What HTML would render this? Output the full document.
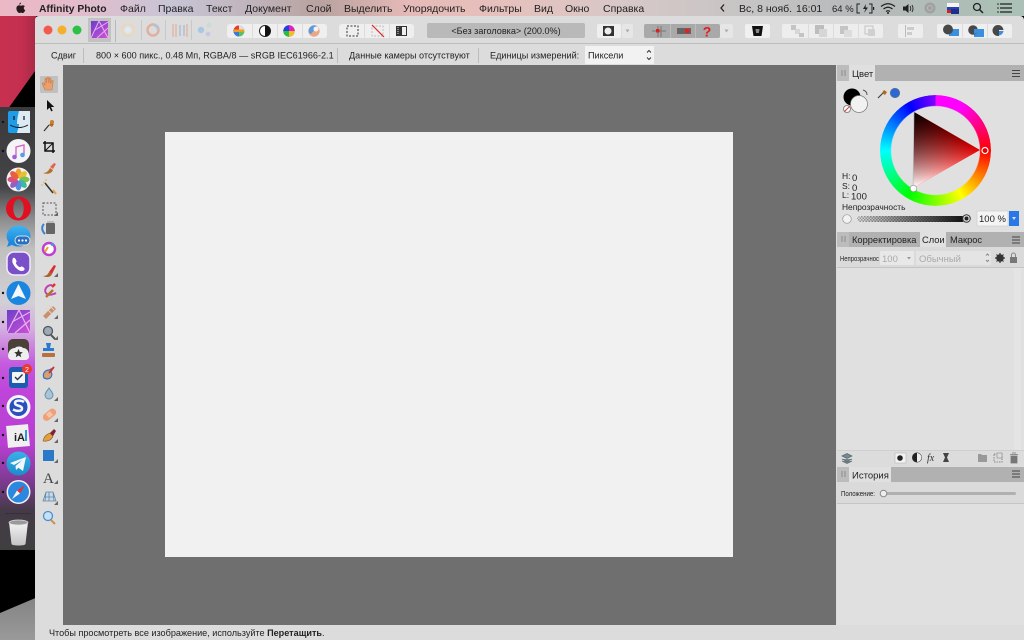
<!DOCTYPE html>
<html lang="ru">
<head>
<meta charset="utf-8">
<title>Affinity Photo</title>
<style>
html,body{margin:0;padding:0;width:1024px;height:640px;overflow:hidden;background:#000}
.a{position:absolute}
svg text{font-family:"Liberation Sans",sans-serif;fill:#222}
</style>
</head>
<body>
<div class="a" style="left:0;top:0;width:1024px;height:640px;overflow:hidden;filter:blur(.3px)">
<!-- desktop -->
<div class="a" style="left:0;top:16px;width:36px;height:94px;background:linear-gradient(90deg,#c8304f 0,#c42f50 60%,#a82a45 100%)"></div>
<div class="a" style="left:0;top:16px;width:36px;height:94px;background:#000;clip-path:polygon(100% 57%,100% 100%,20% 100%)"></div>
<div class="a" style="left:0;top:550px;width:36px;height:90px;background:linear-gradient(180deg,#6a6a6a 0,#9a9a9a 100%)"></div>
<div class="a" style="left:0;top:550px;width:36px;height:90px;background:#000;clip-path:polygon(0 0,100% 0,100% 53%,0 70%)"></div>
<!-- dock -->
<div class="a" style="left:0;top:107px;width:35px;height:443px;background:linear-gradient(180deg,#3a3a3c 0,#444446 18%,#8a8a8c 25%,#c0c0c0 32%,#d2d0d6 44%,#d4aee0 50%,#c45ade 58%,#bf45da 64%,#b83fd2 76%,#7a3a8c 85%,#453a48 91%,#3f3f40 100%)"></div>
<!-- menu bar -->
<div class="a" style="left:0;top:0;width:1024px;height:16px;background:linear-gradient(90deg,#ecb8c6 0,#e3bccb 80px,#c8c5d6 170px,#c0b4bc 250px,#b9a29f 320px,#e6bab8 410px,#e6c0bc 500px,#d8c8c8 620px,#c4c4c4 760px,#b8b9ba 850px,#abc0b6 1000px)"></div>
<!-- window -->
<div class="a" style="left:35px;top:16px;width:989px;height:624px;background:#dcdcdc;border-radius:4px 4px 0 0"></div>
<div class="a" style="left:35px;top:43px;width:989px;height:1px;background:#bdbdbd"></div>
<!-- canvas -->
<div class="a" style="left:63px;top:65px;width:773px;height:560px;background:#6f6f6f"></div>
<div class="a" style="left:165px;top:132px;width:568px;height:425px;background:#f1f1f1"></div>
<!-- panels -->
<div class="a" style="left:837px;top:65px;width:187px;height:560px;background:#e0e0e0"></div>
<div class="a" style="left:837px;top:65px;width:187px;height:16px;background:#b1b1b1"></div>
<div class="a" style="left:837px;top:65px;width:12px;height:16px;background:#bcbcbc"></div>
<div class="a" style="left:849px;top:65px;width:26px;height:16px;background:#e0e0e0"></div>
<div class="a" style="left:837px;top:232px;width:187px;height:15px;background:#b1b1b1"></div>
<div class="a" style="left:837px;top:232px;width:12px;height:15px;background:#bcbcbc"></div>
<div class="a" style="left:920px;top:232px;width:26px;height:15px;background:#e0e0e0"></div>
<div class="a" style="left:837px;top:247px;width:187px;height:20px;background:#dadada"></div>
<div class="a" style="left:837px;top:267px;width:187px;height:1px;background:#c4c4c4"></div>
<div class="a" style="left:1014px;top:268px;width:7px;height:182px;background:#e4e4e4"></div>
<div class="a" style="left:837px;top:450px;width:187px;height:1px;background:#cfcfcf"></div>
<div class="a" style="left:837px;top:451px;width:187px;height:16px;background:#dcdcdc"></div>
<div class="a" style="left:837px;top:467px;width:187px;height:15px;background:#b1b1b1"></div>
<div class="a" style="left:837px;top:467px;width:12px;height:15px;background:#bcbcbc"></div>
<div class="a" style="left:849px;top:467px;width:42px;height:15px;background:#e0e0e0"></div>
<div class="a" style="left:837px;top:482px;width:187px;height:21px;background:#dadada"></div>
<div class="a" style="left:837px;top:503px;width:187px;height:1px;background:#c4c4c4"></div>
<!-- color wheel -->
<div class="a" style="left:880px;top:95px;width:111px;height:111px;border-radius:50%;background:conic-gradient(from 0deg,#ff00ff 30deg,#ff0000 90deg,#ffff00 150deg,#00ff00 210deg,#00ffff 270deg,#0000ff 330deg,#ff00ff 390deg);-webkit-mask:radial-gradient(circle,transparent 44px,#000 45px);mask:radial-gradient(circle,transparent 44px,#000 45px)"></div>
<svg class="a" style="left:0;top:0" width="1024" height="640" viewBox="0 0 1024 640" xmlns="http://www.w3.org/2000/svg">
<defs>
<linearGradient id="tBlack" gradientUnits="userSpaceOnUse" x1="914" y1="112" x2="946" y2="169"><stop offset="0" stop-color="#000"/><stop offset="1" stop-color="#000" stop-opacity="0"/></linearGradient>
<linearGradient id="tWhite" gradientUnits="userSpaceOnUse" x1="913" y1="188" x2="946" y2="131"><stop offset="0" stop-color="#fff"/><stop offset="1" stop-color="#fff" stop-opacity="0"/></linearGradient>
<linearGradient id="alpha" x1="0" x2="1"><stop offset="0" stop-color="#000" stop-opacity="0"/><stop offset="1" stop-color="#111"/></linearGradient>
<pattern id="chk" width="3" height="3" patternUnits="userSpaceOnUse"><rect width="3" height="3" fill="#e4e4e4"/><rect width="1.500" height="1.500" fill="#999"/><rect x="1.500" y="1.500" width="1.500" height="1.500" fill="#999"/></pattern>
<linearGradient id="blueG" x1="0" x2="0" y1="0" y2="1"><stop offset="0" stop-color="#40b4f0"/><stop offset="1" stop-color="#1480d8"/></linearGradient>
<linearGradient id="tgG" x1="0" x2="0" y1="0" y2="1"><stop offset="0" stop-color="#3ab0e8"/><stop offset="1" stop-color="#1c8cc8"/></linearGradient>
<linearGradient id="affG" x1="0" x2="1" y1="0" y2="1"><stop offset="0" stop-color="#6a3fc8"/><stop offset="1" stop-color="#d050d8"/></linearGradient>
<linearGradient id="binG" x1="0" x2="0" y1="0" y2="1"><stop offset="0" stop-color="#f4f4f4"/><stop offset="1" stop-color="#c4c4c4"/></linearGradient>
</defs>

<!-- menu bar -->
<g font-size="10.5">
<path d="M23 5.200c-.9-.1-1.500.5-2 .5s-1.200-.5-1.900-.5c-1.500.1-2.700 1.300-2.700 3.200 0 2.300 1.700 4.600 2.900 4.600.6 0 1-.4 1.700-.4s1 .4 1.700.4c1.100 0 2.100-1.700 2.500-2.900-1.900-.9-1.800-3.200-.2-4zM21 2.500c-.9.100-1.800 1-1.700 2.200 1 0 1.800-1 1.700-2.200z" fill="#2a1a1e"/>
<text x="39" y="12" font-weight="700" font-size="10.300" fill="#1a1a1a">Affinity Photo</text>
<text x="120" y="12" fill="#444">Файл</text>
<text x="158" y="12" fill="#444">Правка</text>
<text x="206" y="12" fill="#333">Текст</text>
<text x="245" y="12" fill="#222">Документ</text>
<text x="306" y="12" fill="#222">Слой</text>
<text x="344" y="12" fill="#333">Выделить</text>
<text x="403" y="12" fill="#444">Упорядочить</text>
<text x="479" y="12" fill="#444">Фильтры</text>
<text x="534" y="12" fill="#444">Вид</text>
<text x="565" y="12" fill="#444">Окно</text>
<text x="603" y="12" fill="#444">Справка</text>
<path d="M724 4.500l-3 3.500 3 3.500" fill="none" stroke="#222" stroke-width="1.300"/>
<text x="739" y="12" fill="#333">Вс, 8 нояб.</text>
<text x="796" y="12" fill="#222">16:01</text>
<text x="832" y="12" fill="#222" font-size="9.500">64 %</text>
<path d="M860 4h-3v9h3M869 4h3v9h-3" fill="none" stroke="#222"/><path d="M866 4l-3 5h2.500l-1.500 4 4-5.500h-2.500z" fill="#222"/><rect x="873" y="7" width="1.200" height="3" fill="#222"/>
<path d="M881 6.500q7-5.500 14 0M883.500 9q4.500-3.500 9 0M886 11.500q2-1.500 4 0" fill="none" stroke="#222" stroke-width="1.200"/><circle cx="888" cy="13" r="1" fill="#222"/>
<path d="M903 6.500h2.500l3-2.500v9l-3-2.500h-2.500z" fill="#222"/><path d="M910 6q1.500 2.500 0 5M912 5q2 3.500 0 7" fill="none" stroke="#333"/>
<circle cx="930" cy="8" r="5.500" fill="#a0a0a0"/><circle cx="930" cy="8" r="2.500" fill="none" stroke="#bbb"/>
<rect x="947" y="3" width="12" height="4" fill="#f4f4f4"/><rect x="947" y="7" width="12" height="3" fill="#2a3fb0"/><rect x="947" y="10" width="12" height="3" fill="#d82020"/><rect x="951" y="9" width="8" height="5" fill="#1a2f90"/>
<circle cx="977" cy="7" r="3.500" fill="none" stroke="#222" stroke-width="1.300"/><path d="M979.500 9.500l3.500 3.500" stroke="#222" stroke-width="1.500"/>
<path d="M1000 4h12M1000 8h12M1000 12h12" stroke="#222" stroke-width="1.300"/><circle cx="998" cy="4" r=".8" fill="#222"/><circle cx="998" cy="8" r=".8" fill="#222"/><circle cx="998" cy="12" r=".8" fill="#222"/>
</g>

<!-- traffic lights -->
<circle cx="48" cy="30" r="4.500" fill="#f25a50"/>
<circle cx="62" cy="30" r="4.500" fill="#f2b02e"/>
<circle cx="77" cy="30" r="4.500" fill="#2cc144"/>
<!-- app persona -->
<rect x="88" y="18" width="23" height="24" fill="#c2c2c2"/>
<rect x="91" y="21" width="17" height="17" fill="url(#affG)"/>
<path d="M91 38l8-17 9 17M95 30l13-8M97 38l11-10" fill="none" stroke="#e8b0f0" stroke-width="1"/>
<rect x="115" y="20" width="1" height="22" fill="#b8b8b8"/>
<circle cx="128" cy="30" r="6" fill="none" stroke="#ecd6bc" stroke-width="2"/><circle cx="128" cy="30" r="3.500" fill="#e2e8f0"/>
<rect x="141" y="20" width="1" height="20" fill="#c8c8c8"/>
<circle cx="153" cy="30" r="5.500" fill="none" stroke="#e0b0a0" stroke-width="2.500"/><path d="M153 25a5 5 0 0 1 5 5" stroke="#b0c4d8" stroke-width="2.500" fill="none"/>
<rect x="165" y="20" width="1" height="20" fill="#c8c8c8"/>
<path d="M173 24v13M176 24v13" stroke="#e0b0a0" stroke-width="1.200"/><path d="M180 25v11M184 25v11" stroke="#a8b8d0" stroke-width="1.200"/><path d="M187 24v13" stroke="#e0b0a0" stroke-width="1.200"/>
<rect x="191" y="20" width="1" height="20" fill="#c8c8c8"/>
<circle cx="201" cy="30" r="3.200" fill="#a8c8e0"/><circle cx="209" cy="25" r="2.400" fill="#c8dcd0"/><circle cx="208" cy="34" r="2.400" fill="#c8c8e4"/>

<!-- group 1 -->
<rect x="227" y="24" width="100" height="14" rx="3" fill="#efefef"/>
<g stroke="#dcdcdc"><path d="M252.500 24v14M277.500 24v14M302.500 24v14"/></g>
<circle cx="239" cy="31" r="5.500" fill="#5cc060"/><path d="M239 25.500a5.500 5.500 0 0 0-5.500 5.500h5.500z" fill="#e83838"/><path d="M239 25.500a5.500 5.500 0 0 1 5.500 5.500H239z" fill="#ddd"/><path d="M233.500 31a5.500 5.500 0 0 0 5.500 5.500V31z" fill="#3a7ae0"/>
<rect x="234" y="29.500" width="10" height="2.500" fill="#f0a020"/>
<circle cx="265" cy="31" r="5.500" fill="#fff" stroke="#222"/><path d="M265 25.500a5.500 5.500 0 0 1 0 11z" fill="#111"/>
<circle cx="289" cy="31" r="5.700" fill="#e83030"/><path d="M289 31V25.300a5.700 5.700 0 0 1 5.700 5.700z" fill="#e020c0"/><path d="M289 31h5.700a5.700 5.700 0 0 1-5.700 5.700z" fill="#f0c020"/><path d="M289 31v5.700a5.700 5.700 0 0 1-5.700-5.700z" fill="#20c040"/><path d="M289 31h-5.700a5.700 5.700 0 0 1 5.700-5.700z" fill="#2040e0"/>
<circle cx="314" cy="31" r="5.700" fill="#e8a888"/><path d="M309 33a5.700 5.700 0 0 1 8-7l-2 3-4 5z" fill="#5a9ae0"/><circle cx="316" cy="29" r="2.500" fill="#f4f4f4"/>

<!-- group 2 -->
<rect x="339" y="24" width="75" height="14" rx="3" fill="#efefef"/>
<g stroke="#dcdcdc"><path d="M364.500 24v14M389.500 24v14"/></g>
<rect x="347" y="26" width="11" height="10" fill="none" stroke="#333" stroke-dasharray="2 1.500"/>
<rect x="372" y="26" width="11" height="10" fill="none" stroke="#bbb" stroke-dasharray="2 1.500"/><path d="M372 25l12 12" stroke="#e02828" stroke-width="1.200"/>
<rect x="396" y="26" width="11" height="10" fill="#333"/><rect x="402" y="27" width="4" height="8" fill="#eee"/><path d="M398 27v8" stroke="#ddd" stroke-dasharray="1 1"/>

<!-- title -->
<rect x="427" y="23" width="158" height="15" rx="2" fill="#b9b9b9"/>
<text x="506" y="34" font-size="9.100" text-anchor="middle" fill="#1c1c1c">&lt;Без заголовка&gt; (200.0%)</text>

<!-- group 3 -->
<rect x="597" y="24" width="24" height="14" rx="2" fill="#efefef"/>
<rect x="603" y="26" width="11" height="10" fill="#333"/><circle cx="608" cy="31" r="3.500" fill="#eee"/>
<rect x="622" y="24" width="11" height="14" rx="2" fill="#e6e6e6"/><path d="M625.500 29.500h4l-2 3z" fill="#aaa"/>
<rect x="644" y="24" width="76" height="14" rx="2" fill="#a9a9a9"/>
<g stroke="#bcbcbc"><path d="M670.500 24v14M695.500 24v14"/></g>
<path d="M652 31h14M658 26v11M661 26v11" stroke="#777" stroke-width="1"/><rect x="656" y="29" width="3.500" height="3.500" fill="#e02020"/>
<rect x="677" y="28" width="14" height="6" fill="#666"/><rect x="685" y="29" width="4.500" height="4" fill="#e82020"/>
<text x="707" y="36.500" font-size="14" font-weight="700" text-anchor="middle" style="fill:#e01c1c">?</text>
<rect x="720" y="24" width="13" height="14" rx="2" fill="#e6e6e6"/><path d="M724.500 29.500h4l-2 3z" fill="#aaa"/>
<rect x="745" y="24" width="25" height="14" rx="2" fill="#f0f0f0"/>
<path d="M752 26h11l-1.500 10h-8z" fill="#111"/><path d="M755.500 29h4l-.6 4h-2.800z" fill="#888"/>
<rect x="782" y="24" width="101" height="14" rx="2" fill="#ededed"/>
<g stroke="#dcdcdc"><path d="M808.500 24v14M833.500 24v14M858.500 24v14"/></g>
<rect x="791" y="25" width="5" height="5" fill="#c4c4c4"/><rect x="795" y="29" width="5" height="5" fill="#d6d6d6"/><rect x="799" y="33" width="5" height="4" fill="#c4c4c4"/>
<rect x="815" y="25" width="9" height="9" fill="#bdbdbd"/><rect x="819" y="29" width="8" height="8" fill="#d6d6d6"/>
<rect x="840" y="26" width="8" height="8" fill="#c4c4c4"/><rect x="844" y="30" width="8" height="7" fill="#dcdcdc"/>
<rect x="865" y="26" width="8" height="8" fill="none" stroke="#c4c4c4"/><rect x="868" y="29" width="7" height="7" fill="#d0d0d0"/>
<rect x="898" y="24" width="25" height="14" rx="2" fill="#ededed"/>
<path d="M905.500 25v12" stroke="#bbb"/><rect x="907" y="27" width="7" height="3" fill="#ccc"/><rect x="907" y="32" width="5" height="3" fill="#ccc"/>
<rect x="937" y="24" width="75" height="14" rx="2" fill="#efefef"/>
<g stroke="#dcdcdc"><path d="M962.500 24v14M987.500 24v14"/></g>
<rect x="949" y="29" width="10" height="7" fill="#3a90e0"/><path d="M949 36l10-7v7z" fill="#3a90e0"/><circle cx="948" cy="29.500" r="5" fill="#484848"/>
<rect x="974" y="29" width="10" height="8" fill="#3a90e0"/><circle cx="973" cy="30" r="4.800" fill="#484848"/><path d="M974 29h4.500a4.800 4.800 0 0 1-4.500 5z" fill="#3a90e0"/>
<circle cx="998" cy="30.500" r="5.500" fill="#484848"/><path d="M999 30h6v7h-6z" fill="#efefef"/><path d="M999 31h4.500a5 5 0 0 1-4.500 4.500z" fill="#3a90e0"/>

<!-- options bar -->
<rect x="585" y="46" width="69" height="18" fill="#f2f2f2"/>
<g font-size="9.100" fill="#222">
<text x="51" y="58.500">Сдвиг</text>
<text x="96" y="58.500">800 × 600 пикс., 0.48 Мп, RGBA/8 — sRGB IEC61966-2.1</text>
<text x="349" y="58.500">Данные камеры отсутствуют</text>
<text x="490" y="58.500">Единицы измерений:</text>
<text x="588" y="58.500">Пиксели</text>
</g>
<path d="M83.500 48v15M337.500 48v15M478.500 48v15" stroke="#bdbdbd"/>
<path d="M647 52.500l2-2 2 2M647 57.500l2 2 2-2" fill="none" stroke="#333"/>

<!-- tools -->
<rect x="40" y="76" width="18" height="17" rx="1" fill="#c0c0c0"/>
<path d="M45 90l-2.500-6c-.5-1.500 1-1.800 1.500-.6l1 2V79c0-1.300 1.500-1.300 1.500 0v4l.5-5c.1-1.300 1.700-1.300 1.700 0v5l.8-4.400c.2-1.200 1.600-1 1.500.2l-.5 4.700 1.200-2.500c.6-1 1.800-.5 1.400.6L52 90z" fill="#e8a070" stroke="#c87840" stroke-width=".6"/>
<path d="M47 100v10l2.500-2.400 1.700 3.800 1.500-.7-1.700-3.700h3.300z" fill="#111"/>
<path d="M44 131l5-6" stroke="#333" stroke-width="1.200"/><path d="M49 125l2-3 3 2-2 3z" fill="#b06820"/><circle cx="52" cy="122" r="2" fill="#c88030"/>
<path d="M45 141v10h10M43 143h10v10" fill="none" stroke="#111" stroke-width="1.500"/><path d="M45 151l8-8" stroke="#111"/>
<path d="M43 173c4 0 6-3 7-5l3 2c-1 3-5 5-10 3z" fill="#b87028"/><path d="M50 167l4-4 2 1-3 5z" fill="#e86050"/>
<path d="M45 183l8 10" stroke="#333" stroke-width="1.500"/><path d="M53 190l3 4" stroke="#e8a040" stroke-width="2"/><path d="M45 183l-2-1M46 181v-2M43 185h-2" stroke="#e8b040"/>
<rect x="43" y="203" width="13" height="12" fill="none" stroke="#555" stroke-dasharray="2 1.500"/><path d="M54 216h4v-4z" fill="#666"/>
<rect x="46" y="223" width="9" height="11" rx="1" fill="#666"/><path d="M44 224c-3 3-2 7 1 10" stroke="#3a80d0" stroke-width="2" fill="none"/><path d="M47 222h7" stroke="#bbb" stroke-width="2"/>
<circle cx="49" cy="249" r="6" fill="#fff" stroke="#c040d0" stroke-width="2.500"/><path d="M45 252l3-5" stroke="#f0a020" stroke-width="2"/><path d="M51 245l3-1" stroke="#30a0e0" stroke-width="2"/>
<path d="M43 276c4 0 5-2 6-4l3 2c-1 3-5 4-9 2z" fill="#a86428"/><path d="M49 272l5-7 2 1-4 8z" fill="#d83030"/><path d="M54 277h4v-4z" fill="#666"/>
<path d="M52 285c-6 0-9 6-5 9 3 2 7 0 9-1" fill="none" stroke="#c040b0" stroke-width="2"/><path d="M46 297l7-7" stroke="#b87028" stroke-width="2.500"/><path d="M52 287l3-3" stroke="#e03030" stroke-width="2.500"/>
<path d="M43 316l10-10 3 3-10 10z" fill="#c89070"/><path d="M46 308l6 6M49 305l5 5" stroke="#e8d0c0"/><path d="M54 319h4v-4z" fill="#666"/>
<circle cx="48" cy="331" r="4.500" fill="#9ab" stroke="#555" stroke-width="1.300"/><path d="M51 335l4 4" stroke="#555" stroke-width="2"/><path d="M54 340h4v-4z" fill="#666"/>
<path d="M46 343h5l-1 5h4v3H43v-3h4z" fill="#2a7ad0"/><rect x="42" y="353" width="13" height="4" rx="1" fill="#b87040"/>
<path d="M44 378c-2-4 1-8 5-8l4-2-2 4c2 3 0 7-4 7z" fill="#d8a070" stroke="#3a70b0" stroke-width="1.200"/><path d="M49 373l5-6" stroke="#d83030" stroke-width="1.800"/>
<path d="M49 388c-2 3-4 5-4 7a4 4 0 0 0 8 0c0-2-2-4-4-7z" fill="#a8c4d8" stroke="#6890a8"/><path d="M54 401h4v-4z" fill="#666"/>
<rect x="42" y="411" width="15" height="7.500" rx="3.700" fill="#f0a078" transform="rotate(-40 49.500 414.700)"/><rect x="47" y="412" width="5" height="5" fill="#f4c4a8" transform="rotate(-40 49.500 414.500)"/><path d="M54 422h4v-4z" fill="#666"/>
<path d="M43 441c1-5 4-7 7-8l3 3c-1 3-4 6-10 5z" fill="#e0a040" stroke="#805020" stroke-width=".6"/><path d="M50 433l4-4 2 2-3 5z" fill="#802030"/><path d="M54 443h4v-4z" fill="#666"/>
<rect x="43" y="450" width="11" height="11" fill="#2a78c8"/><path d="M54 463h4v-4z" fill="#666"/>
<text x="43" y="483" font-size="15" style="font-family:'Liberation Serif',serif;fill:#444">A</text><path d="M54 484h4v-4z" fill="#666"/>
<path d="M43 501l3-9h7l3 9zM46 492l-1 9M49 492v9M53 492l1 9M44 497h11" fill="#c8d8e8" stroke="#6088a8" stroke-width=".8"/><path d="M54 505h4v-4z" fill="#666"/>
<circle cx="48" cy="516" r="4.500" fill="#c8e0f4" stroke="#4a90d0" stroke-width="1.300"/><path d="M51 520l4 4" stroke="#d09050" stroke-width="2"/>

<!-- dock dots -->
<g fill="#111"><circle cx="3" cy="122" r="1.200"/><circle cx="3" cy="151" r="1.200"/><circle cx="3" cy="293" r="1.200"/><circle cx="3" cy="322" r="1.200"/><circle cx="3" cy="349" r="1.200"/><circle cx="3" cy="378" r="1.200"/><circle cx="3" cy="406" r="1.200"/><circle cx="3" cy="435" r="1.200"/><circle cx="3" cy="463" r="1.200"/><circle cx="3" cy="492" r="1.200"/></g>

<!-- finder -->
<rect x="8" y="111" width="22" height="22" rx="2" fill="#1e9ce8"/><path d="M19 111h11v22H17c1-4 2-6 2-9h-2c0-5 1-9 2-13z" fill="#dceaf4"/><path d="M10 125q9 5 18 0" fill="none" stroke="#111" stroke-width="1"/><path d="M14 116v4M24 116v4" stroke="#111" stroke-width="1.200"/>
<!-- music -->
<circle cx="18.500" cy="151" r="12" fill="#f4f4f6"/><path d="M16 157v-10l8-2v10" fill="none" stroke="#d060c0" stroke-width="1.300"/><circle cx="14.500" cy="157" r="2.300" fill="#a060e0"/><circle cx="22.500" cy="155" r="2.300" fill="#50a0e8"/>
<!-- photos -->
<circle cx="18.500" cy="179.500" r="12" fill="#f2f2f2"/>
<g transform="translate(18.500 179.500)"><ellipse cx="0" cy="-6" rx="3" ry="5" fill="#f0a030"/><ellipse cx="0" cy="-6" rx="3" ry="5" fill="#e8c030" transform="rotate(45)"/><ellipse cx="0" cy="-6" rx="3" ry="5" fill="#80c050" transform="rotate(90)"/><ellipse cx="0" cy="-6" rx="3" ry="5" fill="#40b8a0" transform="rotate(135)"/><ellipse cx="0" cy="-6" rx="3" ry="5" fill="#5090e0" transform="rotate(180)"/><ellipse cx="0" cy="-6" rx="3" ry="5" fill="#9060c8" transform="rotate(225)"/><ellipse cx="0" cy="-6" rx="3" ry="5" fill="#d85080" transform="rotate(270)"/><ellipse cx="0" cy="-6" rx="3" ry="5" fill="#e86040" transform="rotate(315)"/></g>
<!-- opera -->
<path fill-rule="evenodd" d="M18.500 196.500a12.500 12 0 1 0 0 24 12.500 12 0 1 0 0-24zM18.500 199a5.200 9.500 0 1 1 0 19 5.200 9.500 0 1 1 0-19z" fill="#e01020"/>
<!-- messages -->
<ellipse cx="18.500" cy="236" rx="12" ry="10.500" fill="url(#blueG)"/><path d="M9 241l-2 6 7-3z" fill="#1c88e0"/><rect x="15" y="236" width="15" height="9" rx="4.500" fill="#2a70c0" stroke="#ddd"/><g fill="#fff"><circle cx="19" cy="240.500" r="1.100"/><circle cx="22.500" cy="240.500" r="1.100"/><circle cx="26" cy="240.500" r="1.100"/></g>
<!-- viber -->
<rect x="7" y="252" width="23" height="23" rx="7" fill="#7a50c8" stroke="#f0eaf8" stroke-width="1.500"/><path d="M13 258c2-1 3 2 3.500 3s-1 1.500-.5 2.500 2 3 3.500 3.500 1.500-1 2.500-.5 3 1.500 2.500 3-3 2-5 1c-3-1.500-6-5-7-8-.5-1.500 0-3.500.5-4.500z" fill="#fff"/>
<!-- spark -->
<circle cx="18.500" cy="293" r="12" fill="#1a86e0"/><path d="M18.500 284l7.500 15-7.500-3-7.500 3z" fill="#f4f8fc"/>
<!-- affinity -->
<rect x="7" y="310" width="23" height="23" fill="url(#affG)"/><path d="M7 333l12-23 11 23M12 322l18-10M15 333l15-13" fill="none" stroke="#e8b0f0" stroke-width="1.200"/>
<!-- bear -->
<rect x="8" y="339" width="21" height="21" rx="5" fill="#4a4038"/><path d="M8 356c0-6 4-8 7-8 1-2 7-2 8 0 3 0 6 2 6 8v1a4 4 0 0 1-4 3H12a4 4 0 0 1-4-4z" fill="#eee"/><path d="M18.500 349l1.300 3 3 .2-2.300 2 .7 3-2.700-1.700-2.700 1.700.7-3-2.300-2 3-.2z" fill="#333"/>
<!-- things -->
<rect x="9" y="367" width="19" height="21" rx="3" fill="#1c5cb0"/><rect x="12" y="372" width="13" height="11" rx="1" fill="#f2f4f8"/><path d="M15 377l2.500 2.500 5-5" fill="none" stroke="#234" stroke-width="1.400"/><circle cx="27" cy="369" r="5" fill="#e83a30"/><text x="27" y="372" font-size="7" text-anchor="middle" style="fill:#fff">2</text>
<!-- simplenote -->
<circle cx="18.500" cy="407" r="12" fill="#f4f6fa"/><circle cx="18.500" cy="407" r="9" fill="#2a50c0"/><path d="M24 402c-3-2-9-2-9 1 0 3.500 7 2 7 5.500 0 3-5 3-9 1" fill="none" stroke="#f4f6fa" stroke-width="2.500"/>
<!-- ia -->
<rect x="7" y="425" width="22" height="22" fill="#f0f0f0" transform="rotate(-5 18 436)"/><text x="14" y="441" font-size="11" font-weight="700" style="fill:#222">iA</text><rect x="25" y="430" width="2" height="11" fill="#2a9ae0"/>
<!-- telegram -->
<circle cx="18.500" cy="463.500" r="12" fill="url(#tgG)"/><path d="M10 463l16-6-3 14-4.500-3.300-2.500 2.300-.5-4 7-6-8.500 5z" fill="#f2f8fc"/>
<!-- safari -->
<circle cx="18.500" cy="492" r="12" fill="#f0f0f0"/><circle cx="18.500" cy="492" r="10.500" fill="#2a88e0"/><path d="M25 485l-5 8.500-3-3z" fill="#e83030"/><path d="M12 499l5-8.500 3 3z" fill="#f4f4f4"/>
<!-- separator + trash -->
<rect x="5" y="513" width="26" height="1" fill="#333"/>
<path d="M9 522h19l-2.500 22c-.2 1-3 1.500-7 1.500s-6.800-.5-7-1.500z" fill="url(#binG)"/><ellipse cx="18.500" cy="522.500" rx="9.500" ry="2.500" fill="#9a9a9a" stroke="#ddd" stroke-width=".8"/>

<!-- color panel -->
<path d="M842 70v6M845 70v6" stroke="#8c8c8c"/>
<text x="852" y="77" font-size="9.500">Цвет</text>
<path d="M1012 70.500h8M1012 73.500h8M1012 76.500h8" stroke="#444"/>
<circle cx="852" cy="97" r="8.500" fill="#000"/>
<circle cx="859" cy="104" r="8.500" fill="#f2f2f2" stroke="#777" stroke-width=".7"/>
<path d="M863 90q4 1 4 5" fill="none" stroke="#555"/>
<circle cx="847" cy="109" r="3.500" fill="#fff" stroke="#888"/><path d="M844.500 111.500l5-5" stroke="#e03030"/>
<path d="M878 98l5-5" stroke="#444" stroke-width="1.200"/><path d="M882 93l2-3 3 2-2 3z" fill="#b06820"/>
<circle cx="895" cy="93" r="4.800" fill="#2a68d8" stroke="#777" stroke-width=".6"/>
<!-- triangle -->
<path d="M914 112L980 150 913 188z" fill="#e60000"/>
<path d="M914 112L980 150 913 188z" fill="url(#tWhite)"/>
<path d="M914 112L980 150 913 188z" fill="url(#tBlack)"/>
<path d="M914 112L913 188" stroke="#bbb" stroke-width=".7"/>
<circle cx="985" cy="150.500" r="3" fill="#e60000" stroke="#fff" stroke-width="1.200"/>
<circle cx="913.500" cy="188.500" r="3.300" fill="#fff" stroke="#888" stroke-width=".6"/>
<g font-size="8.500"><text x="842" y="179">H:</text><text x="842" y="189">S:</text><text x="842" y="198">L:</text></g>
<g font-size="9.500"><text x="852" y="181">0</text><text x="852" y="191">0</text><text x="851" y="199.500">100</text></g>
<text x="842" y="210" font-size="8.400">Непрозрачность</text>
<circle cx="847" cy="219" r="4.300" fill="#f2f2f2" stroke="#999" stroke-width=".7"/>
<rect x="857" y="216" width="108" height="6" rx="3" fill="url(#chk)"/>
<rect x="857" y="216" width="108" height="6" rx="3" fill="url(#alpha)"/>
<circle cx="966.500" cy="218.500" r="3.800" fill="#ddd" stroke="#333"/><circle cx="966.500" cy="218.500" r="2" fill="#222"/>
<rect x="977" y="211" width="31" height="15" fill="#f4f4f4" stroke="#c8c8c8" stroke-width=".6"/>
<text x="979" y="222" font-size="9.500">100 %</text>
<rect x="1009" y="211" width="10" height="15" fill="#2a78e8"/><path d="M1012 217h4l-2 3z" fill="#dde"/>

<!-- layers panel -->
<path d="M842 236v6M845 236v6" stroke="#8c8c8c"/>
<text x="852" y="243" font-size="9.300">Корректировка</text>
<text x="922" y="243" font-size="9.300">Слои</text>
<text x="950" y="243" font-size="9.300">Макрос</text>
<path d="M1012 237h8M1012 240h8M1012 243h8" stroke="#444"/>
<text x="840" y="261" font-size="7.300" textLength="39" lengthAdjust="spacingAndGlyphs">Непрозрачнос</text>
<rect x="880" y="251" width="34" height="14" rx="1" fill="#e8e8e8"/>
<text x="882" y="262" font-size="9.500" style="fill:#aaa">100</text>
<path d="M907 257h4l-2 2.500z" fill="#999"/>
<rect x="916" y="251" width="75" height="14" rx="1" fill="#e4e4e4"/>
<text x="919" y="262" font-size="9.500" style="fill:#aaa">Обычный</text>
<path d="M986 255.500l1.500-1.500 1.500 1.500M986 260l1.500 1.500 1.500-1.500" fill="none" stroke="#888"/>
<circle cx="1000" cy="258" r="3.800" fill="#333"/><circle cx="1000" cy="258" r="1.300" fill="#dadada"/><path d="M1000 253v10M995 258h10M996.500 254.500l7 7M1003.500 254.500l-7 7" stroke="#333" stroke-width="1.200"/>
<rect x="1010" y="257" width="7" height="6" fill="#777"/><path d="M1011.500 257v-2a2 2 0 0 1 4 0v2" fill="none" stroke="#888"/>

<!-- layers footer -->
<path d="M842 456l5-2.500 5 2.500-5 2.500zM842 459l5 2.500 5-2.500M842 461l5 2.500 5-2.500" fill="#7a8a90" stroke="#55656a" stroke-width=".7"/>
<rect x="895" y="453" width="11" height="10" fill="#f2f2f2" stroke="#aaa" stroke-width=".5"/><circle cx="900" cy="458" r="2.800" fill="#222"/>
<circle cx="917" cy="457.500" r="4.500" fill="#eee" stroke="#333"/><path d="M917 453a4.500 4.500 0 0 1 0 9z" fill="#eee"/><path d="M917 453a4.500 4.500 0 0 0 0 9z" fill="#222"/>
<text x="927" y="461" font-size="10" font-style="italic" style="font-family:'Liberation Serif',serif;fill:#333">fx</text>
<path d="M943 453h6l-2 4.500 2 4.500h-6l2-4.500z" fill="#444"/>
<path d="M978 454h3l1 1h5v7h-9z" fill="#999"/>
<rect x="994" y="454" width="8" height="8" fill="none" stroke="#888" stroke-dasharray="1.500 1"/><rect x="997" y="453" width="5" height="5" fill="#ddd" stroke="#888" stroke-width=".6"/>
<path d="M1010 454.500h8M1012 453h4M1011 456h6v7h-6z" fill="#777" stroke="#777" stroke-width=".8"/>

<!-- history -->
<path d="M842 471v6M845 471v6" stroke="#8c8c8c"/>
<text x="852" y="478.500" font-size="9.500">История</text>
<path d="M1012 471h8M1012 474h8M1012 477h8" stroke="#444"/>
<text x="841" y="496" font-size="7" textLength="34" lengthAdjust="spacingAndGlyphs">Положение:</text>
<rect x="885" y="492" width="131" height="3" rx="1.500" fill="#b0b0b0"/>
<circle cx="883.500" cy="493.500" r="3.300" fill="#eee" stroke="#888"/>

<!-- status -->
<text x="49" y="636" font-size="9.100">Чтобы просмотреть все изображение, используйте <tspan font-weight="700">Перетащить</tspan>.</text>
</svg>
</div>
</body>
</html>
